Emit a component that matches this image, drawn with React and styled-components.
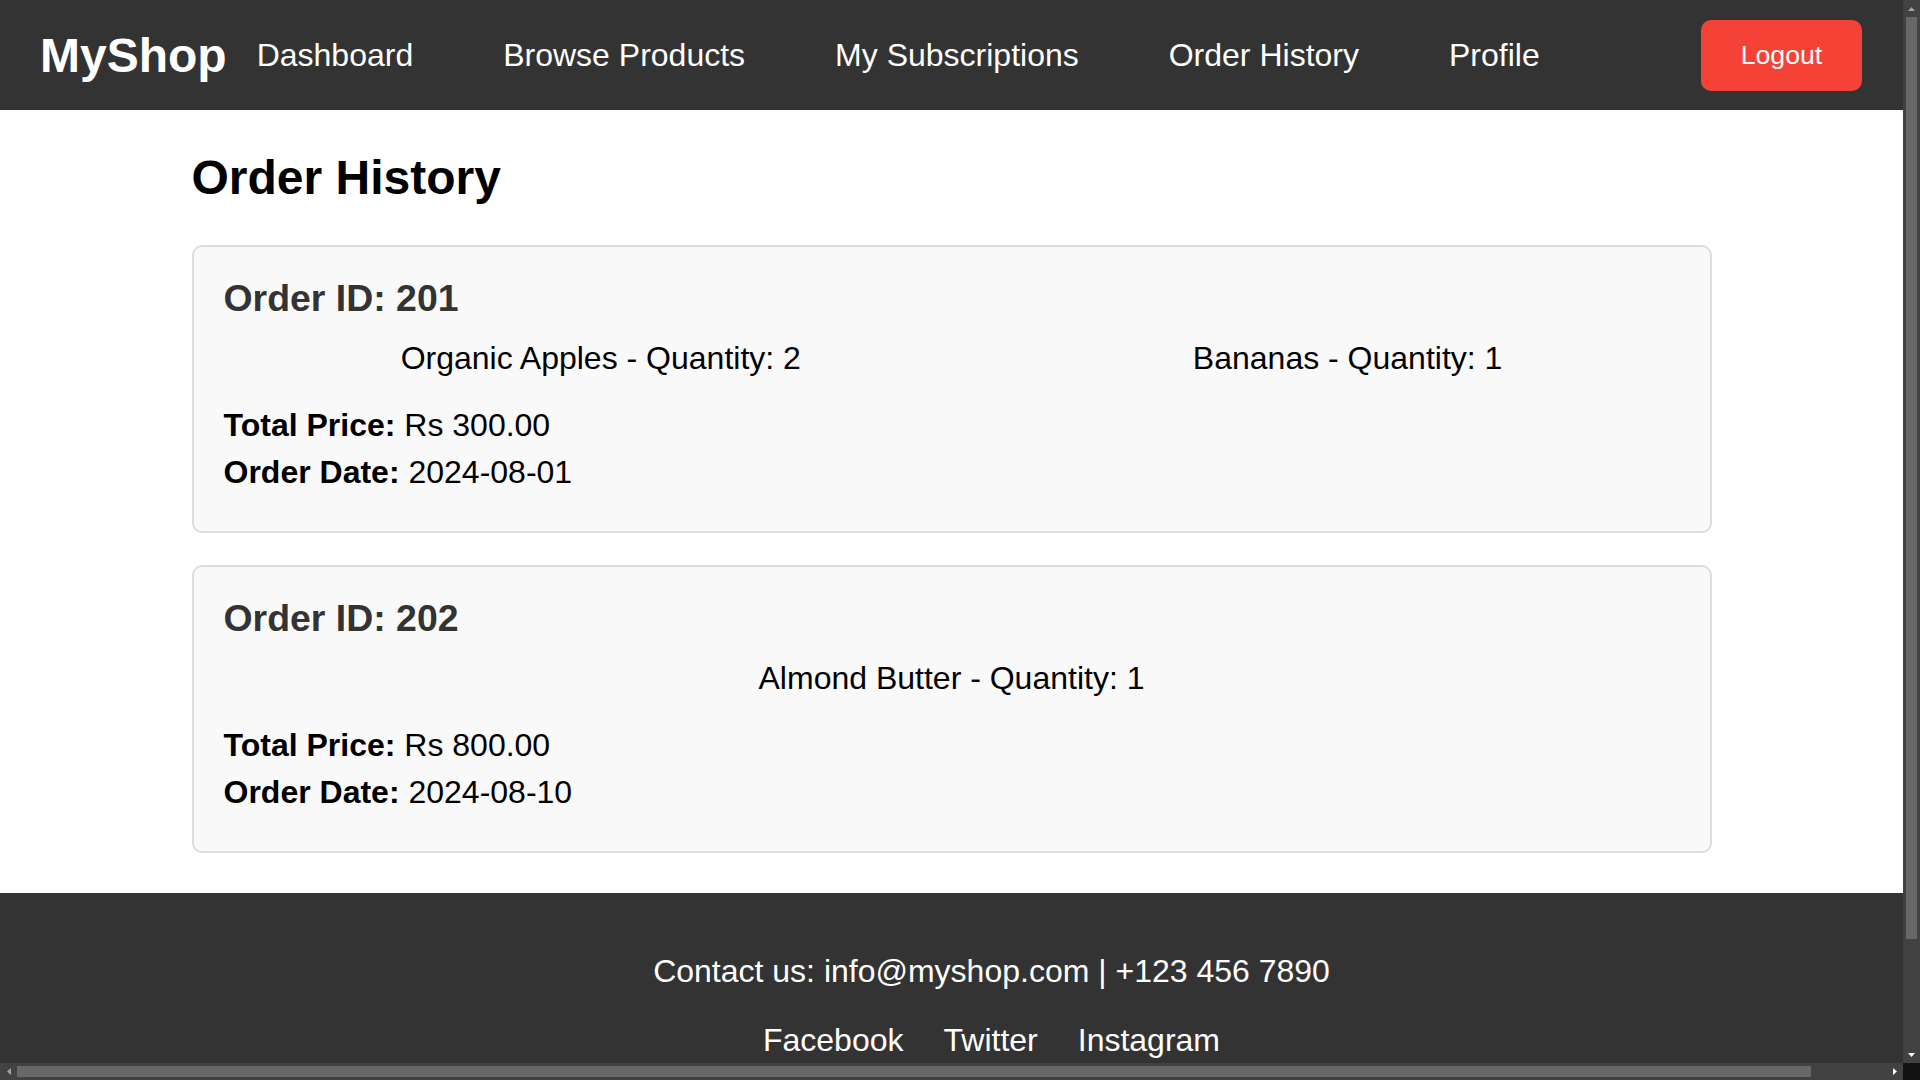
import React from "react";
import styled, { createGlobalStyle } from "styled-components";

const GlobalStyle = createGlobalStyle`
  html {
    color-scheme: dark;
    background: #ffffff;
  }
  body {
    margin: 0 17px 0 0;
    background: #ffffff;
    color: #000000;
    font-family: "Liberation Sans", Arial, Helvetica, sans-serif;
  }
`;

const NavBar = styled.nav`
  display: flex;
  align-items: center;
  width: 100%;
  height: 110px;
  padding: 0 40px;
  background: #333333;
  color: #ffffff;
`;

const Logo = styled.div`
  font-size: 48px;
  font-weight: bold;
  line-height: normal;
`;

const NavLinks = styled.ul`
  display: flex;
  align-items: center;
  gap: 90px;
  list-style: none;
  margin: 0 0 0 30px;
  padding: 0;
`;

const NavLink = styled.a`
  color: #ffffff;
  text-decoration: none;
  font-size: 32px;
`;

const LogoutButton = styled.button`
  margin-left: 161px;
  padding: 20px 40px;
  border: none;
  border-radius: 10px;
  background: #f44336;
  color: #ffffff;
  font-family: "Liberation Sans", Arial, sans-serif;
  font-size: 26.67px;
  line-height: normal;
  cursor: pointer;
`;

const Main = styled.main`
  max-width: 1520px;
  margin: 0 auto;
  padding: 0 40px 40px;
`;

const Title = styled.h2`
  margin: 40px 0;
  font-size: 48px;
  font-weight: bold;
  color: #000000;
`;

const OrderList = styled.div`
  display: flex;
  flex-direction: column;
  gap: 32px;
`;

const OrderCard = styled.section`
  background: #f9f9f9;
  border: 2px solid #dddddd;
  border-radius: 10px;
  padding: 30px;
`;

const OrderId = styled.h3`
  margin: 0;
  font-size: 37.44px;
  font-weight: bold;
  color: #333333;
`;

const ItemList = styled.ul`
  display: flex;
  justify-content: center;
  gap: 392px;
  list-style: none;
  margin: 20px 0 30px;
  padding: 0;
  font-size: 32px;
`;

const Item = styled.li`
  white-space: nowrap;
`;

const Detail = styled.p`
  margin: 10px 0;
  font-size: 32px;
`;

const Footer = styled.footer`
  width: 100%;
  padding: 40px 40px 128px;
  background: #333333;
  color: #ffffff;
  text-align: center;
`;

const Contact = styled.p`
  margin: 20px 0 32px;
  font-size: 32px;
`;

const SocialLinks = styled.div`
  display: flex;
  justify-content: center;
  gap: 40px;
`;

const SocialLink = styled.a`
  color: #ffffff;
  text-decoration: none;
  font-size: 32px;
`;

/* Browser scrollbars as seen in the screenshot (overlay on the page edges) */
const VScroll = styled.div`
  position: fixed;
  top: 0;
  right: 0;
  width: 17px;
  height: calc(100vh - 17px);
  background: #424242;
  display: flex;
  flex-direction: column;
  align-items: center;
  z-index: 10;
`;

const HScroll = styled.div`
  position: fixed;
  left: 0;
  bottom: 0;
  width: calc(100vw - 17px);
  height: 17px;
  background: #424242;
  display: flex;
  align-items: center;
  z-index: 10;
`;

const Corner = styled.div`
  position: fixed;
  right: 0;
  bottom: 0;
  width: 17px;
  height: 17px;
  background: #121212;
  z-index: 10;
`;

const ArrowBox = styled.div`
  flex: 0 0 17px;
  width: 17px;
  height: 17px;
  display: flex;
  align-items: center;
  justify-content: center;
`;

const VThumb = styled.div`
  width: 11px;
  height: 922px;
  border-radius: 0;
  background: #686868;
`;

const HThumb = styled.div`
  width: 1794px;
  height: 11px;
  background: #686868;
`;

const Spacer = styled.div`
  flex: 1;
`;

const Arrow = ({ dir, color }) => {
  const pts = {
    up: "0,4 3.5,0 7,4",
    down: "0,0 7,0 3.5,4",
    left: "4,0 4,7 0,3.5",
    right: "0,0 0,7 4,3.5",
  }[dir];
  const vertical = dir === "up" || dir === "down";
  return (
    <svg
      width={vertical ? 7 : 4}
      height={vertical ? 4 : 7}
      viewBox={vertical ? "0 0 7 4" : "0 0 4 7"}
    >
      <polygon points={pts} fill={color} />
    </svg>
  );
};

const orders = [
  {
    id: 201,
    items: [
      { name: "Organic Apples", qty: 2 },
      { name: "Bananas", qty: 1 },
    ],
    total: "Rs 300.00",
    date: "2024-08-01",
  },
  {
    id: 202,
    items: [{ name: "Almond Butter", qty: 1 }],
    total: "Rs 800.00",
    date: "2024-08-10",
  },
];

const navItems = [
  "Dashboard",
  "Browse Products",
  "My Subscriptions",
  "Order History",
  "Profile",
];

export default function App() {
  return (
    <>
      <GlobalStyle />
      <NavBar>
        <Logo>MyShop</Logo>
        <NavLinks>
          {navItems.map((n) => (
            <li key={n}>
              <NavLink href="#">{n}</NavLink>
            </li>
          ))}
        </NavLinks>
        <LogoutButton>Logout</LogoutButton>
      </NavBar>
      <Main>
        <Title>Order History</Title>
        <OrderList>
          {orders.map((o) => (
            <OrderCard key={o.id}>
              <OrderId>Order ID: {o.id}</OrderId>
              <ItemList>
                {o.items.map((it) => (
                  <Item key={it.name}>
                    {it.name} - Quantity: {it.qty}
                  </Item>
                ))}
              </ItemList>
              <Detail>
                <strong>Total Price:</strong> {o.total}
              </Detail>
              <Detail>
                <strong>Order Date:</strong> {o.date}
              </Detail>
            </OrderCard>
          ))}
        </OrderList>
      </Main>
      <Footer>
        <Contact>Contact us: info@myshop.com | +123 456 7890</Contact>
        <SocialLinks>
          <SocialLink href="#">Facebook</SocialLink>
          <SocialLink href="#">Twitter</SocialLink>
          <SocialLink href="#">Instagram</SocialLink>
        </SocialLinks>
      </Footer>

      <VScroll>
        <ArrowBox>
          <Arrow dir="up" color="#a3a3a3" />
        </ArrowBox>
        <VThumb />
        <Spacer />
        <ArrowBox>
          <Arrow dir="down" color="#ffffff" />
        </ArrowBox>
      </VScroll>
      <HScroll>
        <ArrowBox>
          <Arrow dir="left" color="#a3a3a3" />
        </ArrowBox>
        <HThumb />
        <Spacer />
        <ArrowBox>
          <Arrow dir="right" color="#ffffff" />
        </ArrowBox>
      </HScroll>
      <Corner />
    </>
  );
}
